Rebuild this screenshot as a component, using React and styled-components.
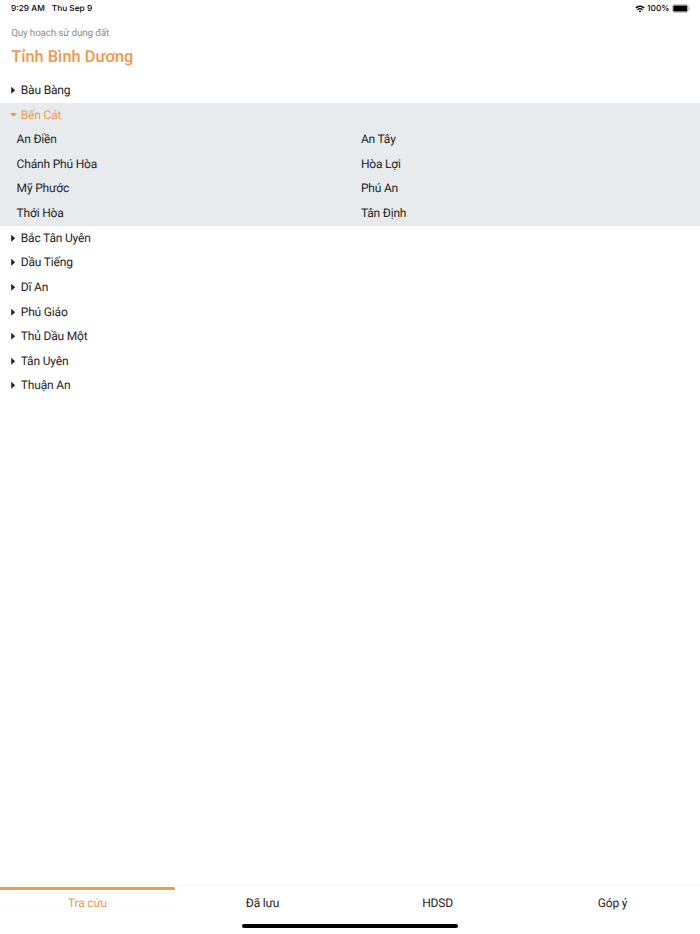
import { useState } from "react";
import styled, { createGlobalStyle } from "styled-components";

const orange = "#f2994a";
const ink = "#242424";

const GlobalStyle = createGlobalStyle`
  * {
    box-sizing: border-box;
  }
  body {
    margin: 0;
    background: #fff;
    color: ${ink};
    font-family: Roboto, "Noto Sans", sans-serif;
    text-rendering: geometricPrecision;
  }
`;

const Screen = styled.div`
  height: 934px;
  display: flex;
  flex-direction: column;
  overflow: hidden;
`;

const StatusBar = styled.div`
  height: 17px;
  padding: 0 10.5px 0 11px;
  display: flex;
  align-items: center;
  justify-content: space-between;
  font-family: Inter, "Liberation Sans", sans-serif;
  font-size: 8.3px;
  line-height: 10px;
  font-weight: 500;
  color: #000;
`;

const StatusGroup = styled.div`
  display: flex;
  align-items: center;
  gap: ${(props) => props.$gap};
`;

const Header = styled.header`
  height: 60.95px;
  padding: 10px 11.2px 0;
`;

const Subtitle = styled.p`
  margin: 0;
  font-size: 9.8px;
  letter-spacing: -0.13px;
  line-height: 14px;
  color: #8c8c8c;
`;

const Title = styled.h1`
  margin: 7px 0 0;
  font-size: 16.4px;
  line-height: 20px;
  font-weight: 500;
  color: ${orange};
`;

const List = styled.main`
  flex: 1;
`;

const Section = styled.section`
  background: ${(props) => (props.$open ? "#e8ebee" : "transparent")};
`;

const District = styled.div`
  height: 24.6px;
  padding-left: 10px;
  display: flex;
  align-items: center;
  font-size: 12px;
  letter-spacing: -0.18px;
  color: ${(props) => (props.$open ? orange : ink)};
  cursor: pointer;

  svg {
    width: 7px;
    height: 8px;
    margin-right: 3.8px;
  }
`;

const Wards = styled.div`
  display: grid;
  grid-template-columns: 344.3px 1fr;
  padding-left: 16.6px;
`;

const Ward = styled.div`
  height: 24.6px;
  line-height: 24.6px;
  font-size: 12px;
  letter-spacing: -0.18px;
`;

const TabBar = styled.nav`
  height: 47px;
  display: flex;
  box-shadow: 0 -1px 3px rgba(0, 0, 0, 0.035);
`;

const Tab = styled.div`
  flex: 1;
  height: 30px;
  padding-top: 6px;
  border-top: 3px solid ${(props) => (props.$active ? orange : "transparent")};
  border-radius: 1px;
  color: ${(props) => (props.$active ? orange : ink)};
  font-size: 12px;
  letter-spacing: -0.18px;
  line-height: 14px;
  text-align: center;
  cursor: pointer;
`;

const HomeIndicator = styled.div`
  position: absolute;
  left: 242.3px;
  top: 924.4px;
  width: 215.4px;
  height: 4px;
  border-radius: 2px;
  background: #000;
`;

const WifiIcon = () => (
  <svg width="10" height="8" viewBox="0 0 10 8" fill="none" stroke="#000">
    <path d="M0.7 3.1C3.1 0.7 6.9 0.7 9.3 3.1" strokeWidth="1.4" />
    <path d="M2.4 4.9C3.9 3.5 6.1 3.5 7.6 4.9" strokeWidth="1.3" />
    <path d="M3.6 6.1C4.4 5.4 5.6 5.4 6.4 6.1L5 7.6Z" fill="#000" stroke="none" />
  </svg>
);

const BatteryIcon = () => (
  <svg width="18" height="9" viewBox="0 0 18 9">
    <rect x="0.4" y="0.6" width="15.8" height="7.8" rx="2.2" fill="#fff" stroke="#aaa" strokeWidth="0.8" />
    <rect x="1.3" y="1.5" width="14" height="6" rx="1.2" fill="#000" />
    <path d="M16.9 3.2C17.8 3.6 17.8 5.4 16.9 5.8Z" fill="#aaa" />
  </svg>
);

const Caret = ({ open }) => (
  <svg viewBox="0 0 7 8" fill="currentColor">
    <path d={open ? "M0 2H7L3.5 5.8Z" : "M1.2 0.8L5.2 4.3L1.2 7.8Z"} />
  </svg>
);

const districts = [
  { name: "Bàu Bàng", wards: [] },
  {
    name: "Bến Cát",
    wards: [
      "An Điền",
      "An Tây",
      "Chánh Phú Hòa",
      "Hòa Lợi",
      "Mỹ Phước",
      "Phú An",
      "Thới Hòa",
      "Tân Định",
    ],
  },
  { name: "Bắc Tân Uyên", wards: [] },
  { name: "Dầu Tiếng", wards: [] },
  { name: "Dĩ An", wards: [] },
  { name: "Phú Giáo", wards: [] },
  { name: "Thủ Dầu Một", wards: [] },
  { name: "Tân Uyên", wards: [] },
  { name: "Thuận An", wards: [] },
];

const tabs = ["Tra cứu", "Đã lưu", "HDSD", "Góp ý"];

const App = () => {
  const [opened, setOpened] = useState("Bến Cát");
  const [tab, setTab] = useState("Tra cứu");

  return (
    <Screen>
      <GlobalStyle />
      <StatusBar>
        <StatusGroup $gap="7px">
          <span>9:29 AM</span>
          <span>Thu Sep 9</span>
        </StatusGroup>
        <StatusGroup $gap="2px">
          <WifiIcon />
          <span>100%</span>
          <BatteryIcon />
        </StatusGroup>
      </StatusBar>
      <Header>
        <Subtitle>Quy hoạch sử dụng đất</Subtitle>
        <Title>Tỉnh Bình Dương</Title>
      </Header>
      <List>
        {districts.map(({ name, wards }) => {
          const open = name === opened;
          return (
            <Section key={name} $open={open}>
              <District $open={open} onClick={() => setOpened(open ? "" : name)}>
                <Caret open={open} />
                {name}
              </District>
              {open && (
                <Wards>
                  {wards.map((ward) => (
                    <Ward key={ward}>{ward}</Ward>
                  ))}
                </Wards>
              )}
            </Section>
          );
        })}
      </List>
      <TabBar>
        {tabs.map((name) => (
          <Tab key={name} $active={name === tab} onClick={() => setTab(name)}>
            {name}
          </Tab>
        ))}
      </TabBar>
      <HomeIndicator />
    </Screen>
  );
};

export default App;
